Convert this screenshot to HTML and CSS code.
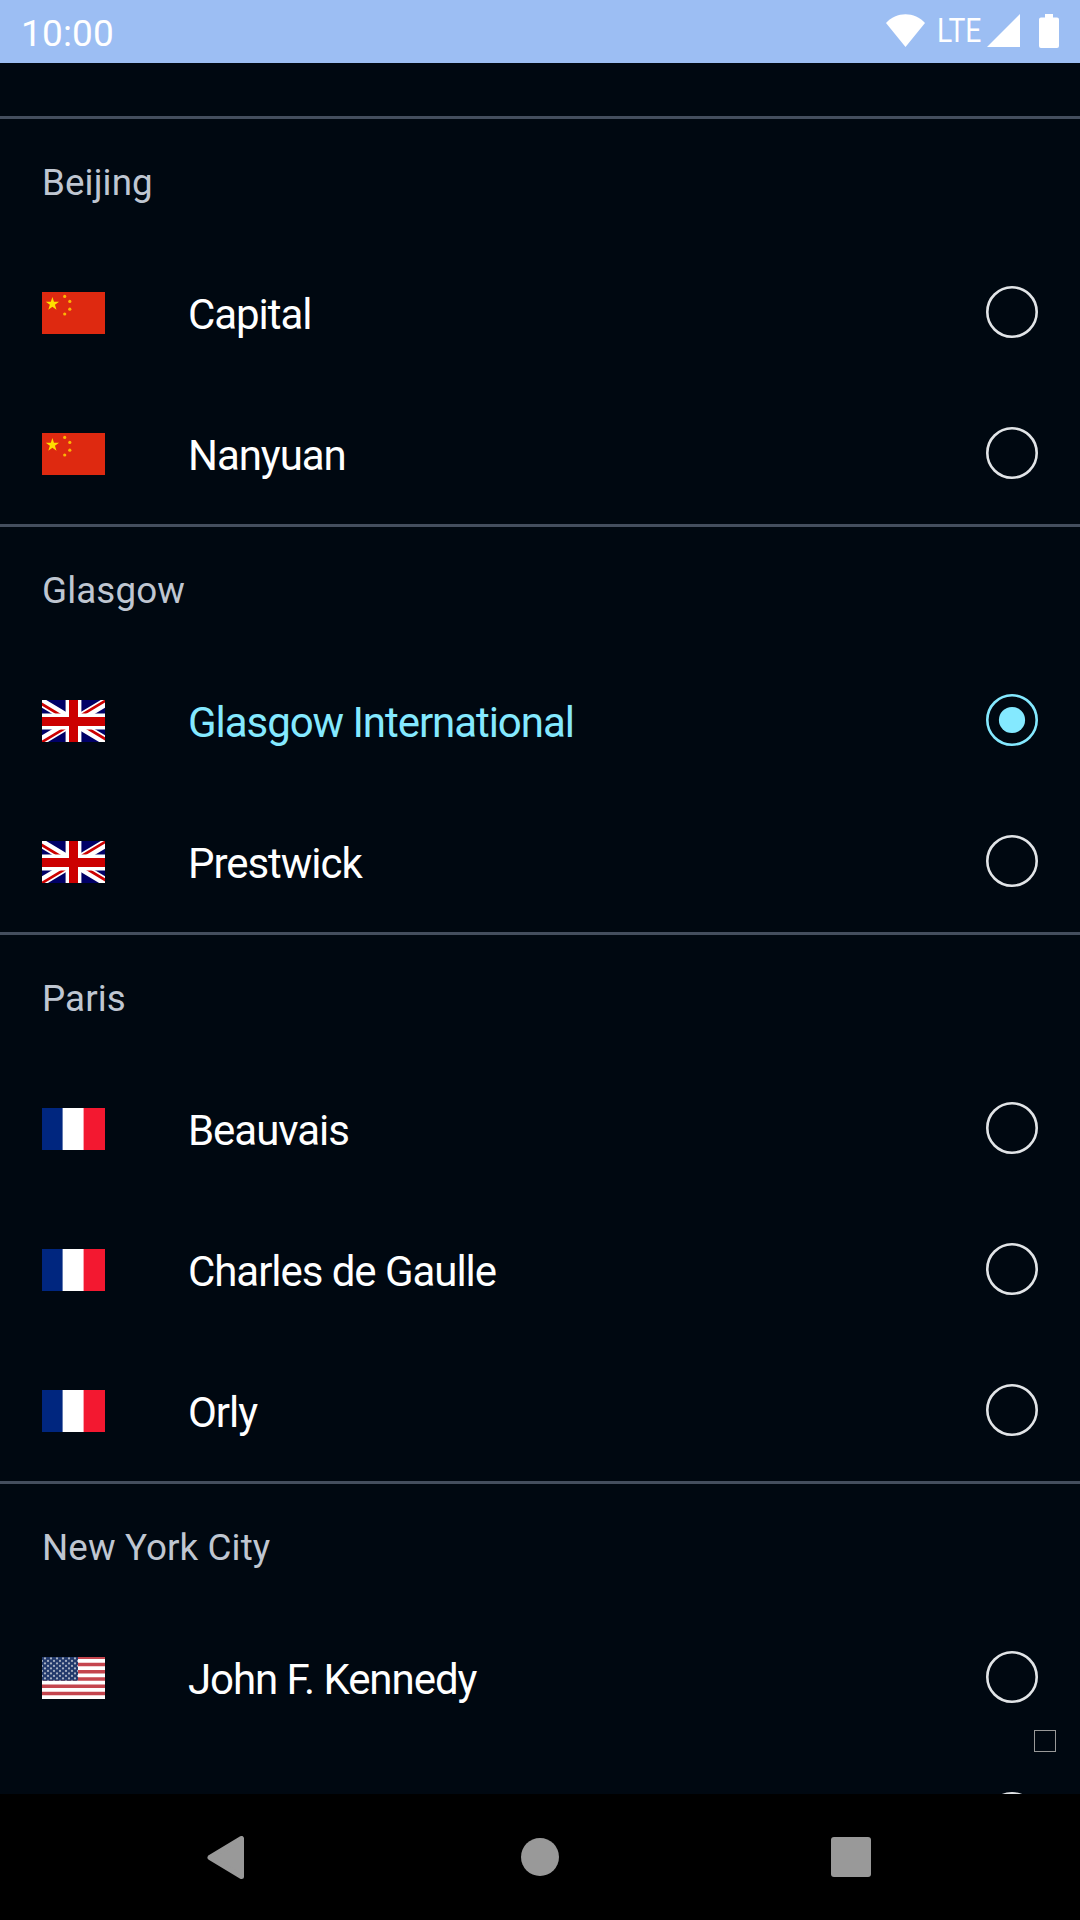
FILE: index.html
```html
<!DOCTYPE html>
<html lang="en">
<head>
<meta charset="utf-8">
<title>Airports</title>
<link rel="stylesheet" href="styles.css">
</head>
<body>
<svg class="defs" width="0" height="0">
  <defs>
    <path id="star" d="M0-1 .225-.309 .951-.309 .363.118 .588.809 0 .382-.588.809-.363.118-.951-.309-.225-.309Z"/>
    <symbol id="cn" viewBox="0 0 63 42">
      <rect width="63" height="42" fill="#de2910"/>
      <g fill="#ffde00">
        <use href="#star" transform="translate(10.4 12) scale(7)"/>
        <circle cx="22.7" cy="4.4" r="1.6" fill="#fbb505"/>
        <circle cx="27.8" cy="9.4" r="1.6" fill="#fbb505"/>
        <circle cx="27.8" cy="17.2" r="1.6" fill="#fbb505"/>
        <circle cx="22.7" cy="22" r="1.6" fill="#fbb505"/>
      </g>
    </symbol>
    <clipPath id="saltire"><path d="M31.5 21.5H63V40.4ZM31.5 21.5V42H-2.7ZM31.5 21.5H0V2.6ZM31.5 21.5V0H67.3Z"/></clipPath>
    <symbol id="gb" viewBox="0 0 63 42">
      <rect width="63" height="42" fill="#006"/>
      <path d="M-5-.4 68 43.4M68-.4-5 43.4" stroke="#fff" stroke-width="8.8"/>
      <path d="M-5-.4 68 43.4M68-.4-5 43.4" stroke="#c00" stroke-width="5.4" clip-path="url(#saltire)"/>
      <path d="M31.5 0V42M0 21.5H63" stroke="#fff" stroke-width="15.8"/>
      <path d="M31.5 0V42M0 21.5H63" stroke="#c00" stroke-width="9"/>
    </symbol>
    <symbol id="fr" viewBox="0 0 63 42">
      <rect width="63" height="42" fill="#fff"/>
      <rect width="20.6" height="42" fill="#00267f"/>
      <rect x="41.6" width="21.4" height="42" fill="#f31830"/>
    </symbol>
    <pattern id="stars" width="6" height="5" patternUnits="userSpaceOnUse">
      <circle cx="3" cy="1.4" r="1.1" fill="#a9b2c4"/><circle cx="0" cy="3.9" r="1.1" fill="#a9b2c4"/><circle cx="6" cy="3.9" r="1.1" fill="#a9b2c4"/>
    </pattern>
    <symbol id="us" viewBox="0 0 63 42">
      <rect width="63" height="42" fill="#fff"/>
      <path d="M0 .3H63M0 7.5H63M0 14.8H63M0 22H63M0 29.2H63M0 36.5H63" stroke="#c4454e" stroke-width="3.5"/>
      <rect width="36" height="23.7" fill="#22396b"/>
      <rect width="36" height="23.7" fill="url(#stars)"/>
    </symbol>
    <symbol id="off" viewBox="0 0 52 52"><circle cx="26" cy="26" r="24.7" fill="none" stroke="#e1e4e7" stroke-width="2.6"/></symbol>
    <symbol id="on" viewBox="0 0 52 52"><circle cx="26" cy="26" r="24.7" fill="none" stroke="#84e9ff" stroke-width="2.6"/><circle cx="26" cy="26" r="13.1" fill="#84e9ff"/></symbol>
  </defs>
</svg>
<div class="screen">
  <header class="status">
    <span class="clock">10:00</span>
    <svg class="wifi" width="39" height="33" viewBox="0 0 39 33"><path d="M0 9C10-2.7 29-2.7 39 9L19.5 33Z" fill="#fff"/></svg>
    <span class="lte">LTE</span>
    <svg class="signal" width="33" height="33" viewBox="0 0 33 33"><path d="M33 0V33H0Z" fill="#fff"/></svg>
    <svg class="battery" width="20" height="34" viewBox="0 0 20 34"><path d="M6 0H14V3.4H18A2 2 0 0 1 20 5.4V32A2 2 0 0 1 18 34H2A2 2 0 0 1 0 32V5.4A2 2 0 0 1 2 3.4H6Z" fill="#fff"/></svg>
  </header>
  <main class="list">
    <section class="group">
      <h2 class="city">Beijing</h2>
      <div class="row"><svg class="flag"><use href="#cn"/></svg><span class="name">Capital</span><svg class="radio"><use href="#off"/></svg></div>
      <div class="row"><svg class="flag"><use href="#cn"/></svg><span class="name">Nanyuan</span><svg class="radio"><use href="#off"/></svg></div>
    </section>
    <section class="group">
      <h2 class="city">Glasgow</h2>
      <div class="row selected"><svg class="flag"><use href="#gb"/></svg><span class="name">Glasgow International</span><svg class="radio"><use href="#on"/></svg></div>
      <div class="row"><svg class="flag"><use href="#gb"/></svg><span class="name">Prestwick</span><svg class="radio"><use href="#off"/></svg></div>
    </section>
    <section class="group">
      <h2 class="city">Paris</h2>
      <div class="row"><svg class="flag"><use href="#fr"/></svg><span class="name">Beauvais</span><svg class="radio"><use href="#off"/></svg></div>
      <div class="row"><svg class="flag"><use href="#fr"/></svg><span class="name">Charles de Gaulle</span><svg class="radio"><use href="#off"/></svg></div>
      <div class="row"><svg class="flag"><use href="#fr"/></svg><span class="name">Orly</span><svg class="radio"><use href="#off"/></svg></div>
    </section>
    <section class="group">
      <h2 class="city">New York City</h2>
      <div class="row"><svg class="flag"><use href="#us"/></svg><span class="name">John F. Kennedy</span><svg class="radio"><use href="#off"/></svg></div>
      <div class="row"><svg class="radio"><use href="#off"/></svg></div>
    </section>
    <i class="marker"></i>
  </main>
  <nav class="nav">
    <svg width="38" height="43" viewBox="0 0 38 43"><path d="M34.5 2.5V40.5L3 21.5Z" fill="#999" stroke="#999" stroke-width="5" stroke-linejoin="round"/></svg>
    <svg class="home" width="38" height="38" viewBox="0 0 38 38"><circle cx="19" cy="19" r="19" fill="#999"/></svg>
    <svg width="40" height="40" viewBox="0 0 40 40"><rect width="40" height="40" rx="3" fill="#999"/></svg>
  </nav>
</div>
</body>
</html>
```
FILE: styles.css
```css
* { box-sizing: border-box; }
body { margin: 0; background: #000; font-family: Roboto, "Liberation Sans", sans-serif; }
.defs { display: block; }
.screen { width: 1080px; height: 1920px; display: flex; flex-direction: column; overflow: hidden; }
.status { height: 63px; flex: none; display: flex; align-items: flex-start; padding: 0 21px 0 21px; background: #9cbef3; color: #fff; }
.clock { font-size: 37px; line-height: 43px; margin-top: 12px; letter-spacing: .15px; flex: 1; }
.wifi { margin: 14px 12px 0 0; }
.lte { width: 50px; font-size: 32.5px; line-height: 38px; margin-top: 12px; white-space: nowrap; transform: scaleX(.87); transform-origin: 0 0; }
.signal { margin-top: 14px; }
.battery { margin: 14px 0 0 19px; }
.list { height: 1731px; flex: none; overflow: hidden; position: relative; padding-top: 53px; background: #000811; }
.group { border-top: 3px solid #444e5e; }
.city { margin: 0; height: 123px; padding: 42px 42px 0; font-size: 36.75px; line-height: 44px; font-weight: 400; letter-spacing: .12px; color: #bfc6d1; }
.row { height: 141px; display: flex; align-items: center; padding: 0 42px; color: #fff; }
.flag { width: 63px; height: 42px; flex: none; margin-right: 83px; }
.name { font-size: 42px; line-height: 50px; letter-spacing: -1.05px; padding-top: 4px; white-space: nowrap; }
.radio { width: 52px; height: 52px; flex: none; margin: 0 0 1px auto; }
.selected { color: #84e9ff; }
.marker { position: absolute; left: 1034px; top: 1667px; width: 22px; height: 22px; border: 1px solid #999; }
.nav { height: 126px; flex: none; display: flex; align-items: center; justify-content: space-between; padding: 0 209px 0 207px; background: #000; }
.home { margin-left: 4px; }
```
